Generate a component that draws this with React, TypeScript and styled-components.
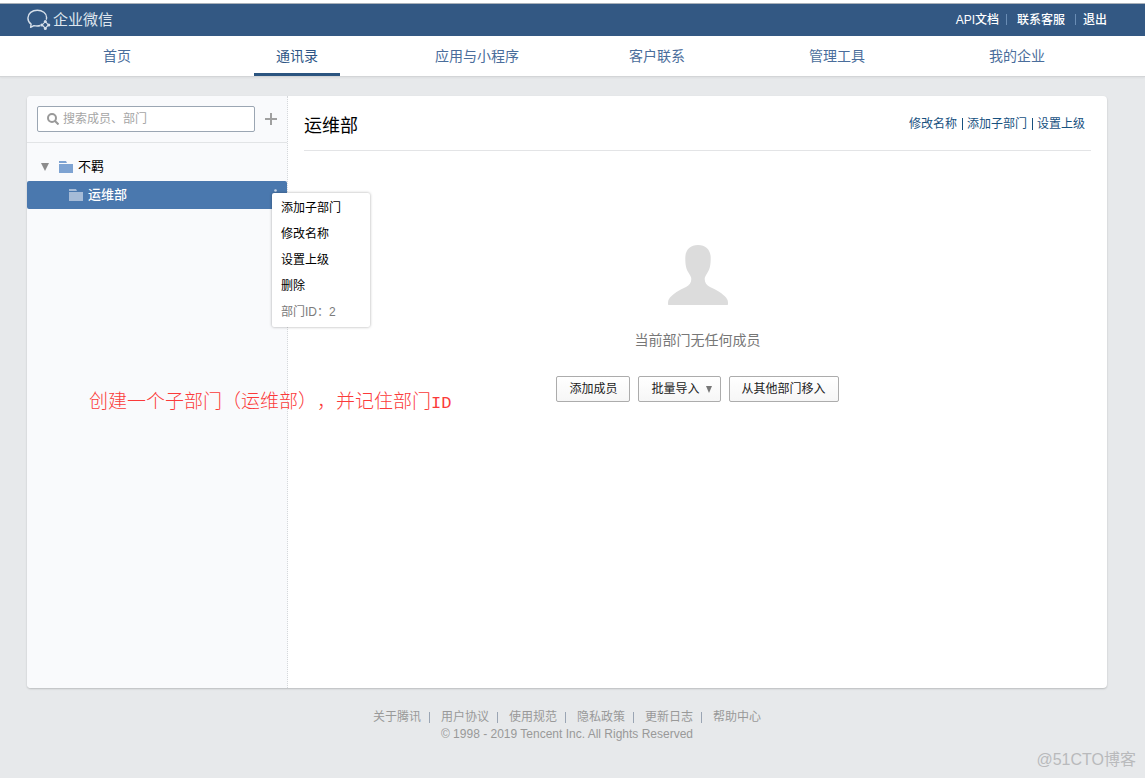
import React from "react";
import styled, { createGlobalStyle } from "styled-components";

const GlobalStyle = createGlobalStyle`
  * { box-sizing: border-box; }
  body {
    margin: 0;
    background: #e7e9eb;
    font: 12px/18px "Liberation Sans", "Noto Sans CJK SC", sans-serif;
    color: #000;
  }
  a { color: inherit; text-decoration: none; }
  button, input { font: inherit; }
  ul { list-style: none; margin: 0; padding: 0; }
`;

const Page = styled.div`
  min-height: 100vh;
  position: relative;
`;

const Container = styled.div`
  max-width: 1080px;
  margin: 0 auto;
`;

const Gutter = styled.div`
  padding: 0 38px 0 27px;
`;

const TopBar = styled(Gutter).attrs({ as: "header" })`
  background: #335883;
  border-top: 3px solid #fff;
  box-shadow: inset 0 1px #a9b0b8;
`;

const TopBarInner = styled(Container)`
  display: flex;
  align-items: center;
  justify-content: space-between;
  height: 33px;
`;

const Brand = styled.a`
  display: flex;
  align-items: center;
  gap: 2px;
  color: #dfe6ee;
  font-size: 15px;
`;

const TopLinks = styled.nav`
  display: flex;
  align-items: center;
  color: #fff;
  font-weight: 500;
  a:nth-of-type(2) { padding: 0 3px; }
`;

const TopDivider = styled.span`
  width: 1px;
  height: 11px;
  margin: 0 7px;
  background: #6a8db5;
`;

const NavBar = styled(Gutter).attrs({ as: "nav" })`
  background: #fff;
  border-bottom: 1px solid #d3d5d7;
  box-shadow: 0 1px 2px rgba(0, 0, 0, 0.05);
`;

const NavList = styled(Container).attrs({ as: "ul" })`
  display: flex;
`;

const NavItem = styled.li`
  flex: 1;
  display: flex;
  justify-content: center;
`;

const NavLink = styled.a<{ $active?: boolean }>`
  height: 40px;
  padding: 0 22px;
  font-size: 14px;
  line-height: 40px;
  color: ${(p) => (p.$active ? "#2e5586" : "#4a6d9b")};
  box-shadow: ${(p) => (p.$active ? "inset 0 -3px #2b5580" : "none")};
`;

const Panel = styled(Container).attrs({ as: "main" })`
  display: flex;
  min-height: 592px;
  margin-top: 19px;
  background: #fff;
  border-radius: 4px;
  box-shadow: 0 1px 2px rgba(0, 0, 0, 0.2);
`;

const Sidebar = styled.aside`
  flex: 0 0 261px;
  background: #f9fafc;
  border-right: 1px dotted #d5d8db;
  border-radius: 4px 0 0 4px;
`;

const SearchRow = styled.div`
  display: flex;
  align-items: center;
  gap: 10px;
  padding: 10px;
  border-bottom: 1px solid #e2e4e6;
`;

const SearchBox = styled.label`
  flex: 1;
  display: flex;
  align-items: center;
  gap: 4px;
  height: 26px;
  padding: 0 9px;
  background: #fff;
  border: 1px solid #9ba6b3;
  border-radius: 2px;
`;

const SearchInput = styled.input`
  flex: 1;
  min-width: 0;
  padding: 0;
  border: 0;
  outline: 0;
  background: none;
  &::placeholder { color: #a5a5a5; opacity: 1; }
`;

const IconButton = styled.button`
  display: flex;
  padding: 0;
  border: 0;
  background: none;
`;

const Tree = styled.ul`
  && { padding-top: 10px; }
`;

const TreeRow = styled.li<{ $level: number; $selected?: boolean }>`
  position: relative;
  display: flex;
  align-items: center;
  height: 28px;
  padding: 0 10px 0 ${(p) => (p.$level ? 42 : 14)}px;
  font-size: 13px;
  font-weight: ${(p) => (p.$selected ? 500 : 400)};
  color: ${(p) => (p.$selected ? "#fff" : "#000")};
  background: ${(p) => (p.$selected ? "#4a78ae" : "none")};
  border-radius: 2px;
`;

const Folder = styled.svg`
  margin-right: 5px;
`;

const TreeToggle = styled(IconButton)`
  margin-right: 10px;
`;

const MoreButton = styled(IconButton)`
  margin-left: auto;
`;

const Menu = styled.ul`
  && {
    position: absolute;
    top: 12px;
    left: 245px;
    width: 98px;
    padding: 2px 0;
  }
  background: #fff;
  border-radius: 2px;
  box-shadow: 0 0 3px rgba(0, 0, 0, 0.35);
  font-size: 12px;
  font-weight: 400;
`;

const MenuAction = styled.button`
  display: block;
  width: 100%;
  height: 26px;
  padding: 0 9px;
  border: 0;
  background: none;
  text-align: left;
  color: #000;
`;

const MenuNote = styled.span`
  display: block;
  padding: 0 9px;
  line-height: 26px;
  color: #7b7b7b;
`;

const Content = styled.section`
  flex: 1;
  min-width: 0;
  padding: 0 16px;
`;

const ContentHeader = styled.header`
  display: flex;
  align-items: center;
  justify-content: space-between;
  height: 55px;
  padding-top: 2px;
  padding-right: 6px;
  border-bottom: 1px solid #e3e4e6;
`;

const Title = styled.h1`
  margin: 4px 0 0;
  font-size: 18px;
  line-height: 24px;
  font-weight: 400;
`;

const HeaderLinks = styled.nav`
  display: flex;
  align-items: center;
  color: #17517f;
`;

const LinkDivider = styled.span`
  width: 1px;
  height: 12px;
  margin: 0 4px 0 5px;
  background: #17517f;
`;

const Empty = styled.div`
  display: flex;
  flex-direction: column;
  align-items: center;
  padding-top: 94px;
`;

const EmptyText = styled.p`
  margin: 25px 0 26px;
  font-size: 14px;
  line-height: 20px;
  color: #777;
`;

const Actions = styled.div`
  display: flex;
  flex-wrap: wrap;
  gap: 8px;
`;

const Button = styled.button`
  display: flex;
  align-items: center;
  gap: 6px;
  height: 26px;
  padding: 0 12px;
  color: #222;
  background: linear-gradient(#fff, #f6f6f6);
  border: 1px solid #acacac;
  border-radius: 2px;
`;

const DropButton = styled(Button)`
  padding: 0 8px 0 12px;
`;

const Annotation = styled.p`
  position: absolute;
  top: 388px;
  left: 89px;
  margin: 0;
  font-family: "Noto Sans CJK SC", sans-serif;
  font-size: 19px;
  font-weight: 300;
  line-height: 24px;
  text-spacing-trim: space-all;
  color: #fb3a3a;
`;

const Latin = styled.span`
  font-family: "Liberation Mono", monospace;
  font-size: 17px;
`;

const Footer = styled(Gutter).attrs({ as: "footer" })`
  display: flex;
  flex-direction: column;
  align-items: center;
  padding-top: 20px;
  padding-bottom: 16px;
  color: #999;
`;

const FooterLinks = styled.nav`
  display: flex;
  flex-wrap: wrap;
  align-items: center;
`;

const FooterDivider = styled.span`
  width: 1px;
  height: 11px;
  margin: 0 11px 0 8px;
  background: #9aa5b4;
`;

const Copyright = styled.p`
  margin: 0;
  line-height: 16px;
`;

const Watermark = styled.span`
  position: absolute;
  right: 9px;
  bottom: 6px;
  font-size: 16px;
  line-height: 24px;
  color: #b9babc;
`;

function FolderIcon({ color }: { color: string }) {
  return (
    <Folder width="14" height="12" viewBox="0 0 14 12" fill={color}>
      <path d="M0 0h7l1 2H0zM0 3h14v9H0z" />
    </Folder>
  );
}

function Caret({ color, width, height }: { color: string; width: number; height: number }) {
  return (
    <svg width={width} height={height} viewBox="0 0 8 8" preserveAspectRatio="none" fill={color}>
      <path d="M0 0h8L4 8z" />
    </svg>
  );
}

const navItems = ["首页", "通讯录", "应用与小程序", "客户联系", "管理工具", "我的企业"];
const topLinks = ["API文档", "联系客服", "退出"];
const headerLinks = ["修改名称", "添加子部门", "设置上级"];
const menuActions = ["添加子部门", "修改名称", "设置上级", "删除"];
const footerLinks = ["关于腾讯", "用户协议", "使用规范", "隐私政策", "更新日志", "帮助中心"];

export default function App() {
  return (
    <Page>
      <GlobalStyle />
      <TopBar>
        <TopBarInner>
          <Brand href="#">
            <svg width="24" height="22" viewBox="0 0 24 22" fill="none" stroke="#d6dfe9">
              <path
                strokeWidth="1.4"
                strokeLinejoin="round"
                d="M19.2 10.600c.3-.7.400-1.400.400-2.200C19.600 4.200 15.400 1.300 10.300 1.300S.9 4.400.9 8.900c0 2.700 1.300 4.800 3.200 6.200l-.5 3.200 3.300-1.700c2.200.5 4.500.5 6.500-.1"
              />
              <path strokeWidth="1.100" d="M18.300 12.700l3.200 3.200-3.200 3.200-3.200-3.200z" />
              <g fill="#d6dfe9" stroke="none">
                <circle cx="18.300" cy="12.400" r="1.500" />
                <circle cx="21.800" cy="15.900" r="1.500" />
                <circle cx="18.300" cy="19.400" r="1.500" />
                <circle cx="14.800" cy="15.900" r="1.500" />
              </g>
            </svg>
            企业微信
          </Brand>
          <TopLinks>
            {topLinks.map((t, i) => (
              <React.Fragment key={t}>
                {i > 0 && <TopDivider />}
                <a href="#">{t}</a>
              </React.Fragment>
            ))}
          </TopLinks>
        </TopBarInner>
      </TopBar>
      <NavBar>
        <NavList>
          {navItems.map((t) => (
            <NavItem key={t}>
              <NavLink href="#" $active={t === "通讯录"}>{t}</NavLink>
            </NavItem>
          ))}
        </NavList>
      </NavBar>
      <Gutter>
        <Panel>
          <Sidebar>
            <SearchRow>
              <SearchBox>
                <svg width="12" height="12" viewBox="0 0 12 12" fill="none" stroke="#999" strokeWidth="2">
                  <circle cx="5" cy="5" r="4" />
                  <path d="M8 8l3.500 3.500" />
                </svg>
                <SearchInput type="text" aria-label="搜索成员、部门" placeholder="搜索成员、部门" />
              </SearchBox>
              <IconButton aria-label="添加">
                <svg width="12" height="12" viewBox="0 0 12 12" fill="#a0a0a0">
                  <path d="M5 0h2v12H5zM0 5h12v2H0z" />
                </svg>
              </IconButton>
            </SearchRow>
            <Tree>
              <TreeRow $level={0}>
                <TreeToggle aria-label="收起">
                  <Caret color="#8c8c8c" width={8} height={8} />
                </TreeToggle>
                <FolderIcon color="#7ea3d2" />
                不羁
              </TreeRow>
              <TreeRow $level={1} $selected>
                <FolderIcon color="#a5bbd7" />
                运维部
                <MoreButton aria-label="更多">
                  <svg width="3" height="13" viewBox="0 0 3 13" fill="#c8d6e7">
                    <circle cx="1.500" cy="1.500" r="1.300" />
                    <circle cx="1.500" cy="6.500" r="1.300" />
                    <circle cx="1.500" cy="11.500" r="1.300" />
                  </svg>
                </MoreButton>
                <Menu>
                  {menuActions.map((t) => (
                    <li key={t}><MenuAction>{t}</MenuAction></li>
                  ))}
                  <li><MenuNote>部门ID：2</MenuNote></li>
                </Menu>
              </TreeRow>
            </Tree>
          </Sidebar>
          <Content>
            <ContentHeader>
              <Title>运维部</Title>
              <HeaderLinks>
                {headerLinks.map((t, i) => (
                  <React.Fragment key={t}>
                    {i > 0 && <LinkDivider />}
                    <a href="#">{t}</a>
                  </React.Fragment>
                ))}
              </HeaderLinks>
            </ContentHeader>
            <Empty>
              <svg width="60" height="60" viewBox="0 0 60 60" fill="#dcdcdc">
                <path d="M30 0c8 0 12.700 5 12.700 13 0 7-.7 11-3.700 15.500-1.700 2.500-2.300 4-2.300 5.500 0 3.500 1.800 6.300 5.300 8 7.500 3.500 12.500 6.500 16 10.500 2 2.200 2 4.500 2 6.500 0 .7-.3 1-1 1H1c-.7 0-1-.3-1-1 0-2 0-4.300 2-6.500 3.500-4 8.500-7 16-10.500 3.500-1.700 5.300-4.500 5.300-8 0-1.500-.6-3-2.300-5.500-3-4.500-3.700-8.500-3.700-15.500C17.300 5 22 0 30 0z" />
              </svg>
              <EmptyText>当前部门无任何成员</EmptyText>
              <Actions>
                <Button>添加成员</Button>
                <DropButton>
                  批量导入
                  <Caret color="#777" width={6} height={7} />
                </DropButton>
                <Button>从其他部门移入</Button>
              </Actions>
            </Empty>
          </Content>
        </Panel>
      </Gutter>
      <Footer>
        <FooterLinks>
          {footerLinks.map((t, i) => (
            <React.Fragment key={t}>
              {i > 0 && <FooterDivider />}
              <a href="#">{t}</a>
            </React.Fragment>
          ))}
        </FooterLinks>
        <Copyright>© 1998 - 2019 Tencent Inc. All Rights Reserved</Copyright>
      </Footer>
      <Annotation>创建一个子部门（运维部），并记住部门<Latin>ID</Latin></Annotation>
      <Watermark>@51CTO博客</Watermark>
    </Page>
  );
}
